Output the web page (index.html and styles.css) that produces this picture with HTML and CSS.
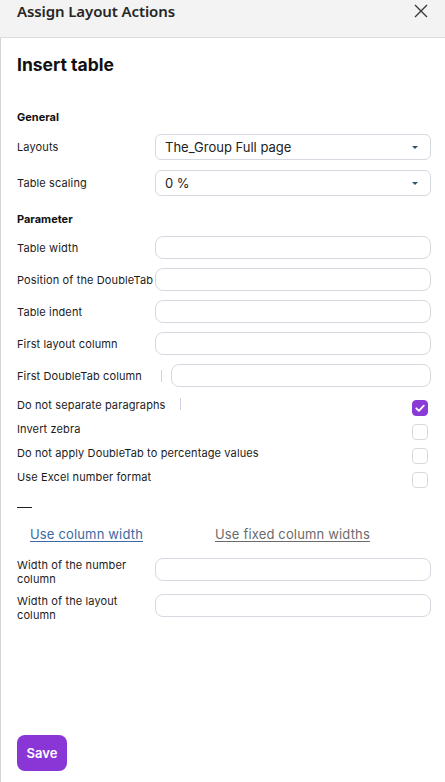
FILE: index.html
```html
<!DOCTYPE html>
<html>
<head>
<meta charset="utf-8">
<link rel="stylesheet" href="styles.css">
</head>
<body>
<div class="header">
  <div class="header-title">Assign Layout Actions</div>
  <button class="close" aria-label="Close">
    <svg width="16" height="16" viewBox="0 0 16 16"><path d="M2 2 L14 14 M14 2 L2 14" stroke="#3a3a3a" stroke-width="1.4" fill="none"/></svg>
  </button>
</div>
<div class="panel">
  <h1 class="title">Insert table</h1>

  <div class="section-title general">General</div>
  <div class="row row-select">
    <div class="label">Layouts</div>
    <div class="select"><span>The_Group Full page</span><span class="arrow"></span></div>
  </div>
  <div class="row row-select gap10">
    <div class="label">Table scaling</div>
    <div class="select"><span>0 %</span><span class="arrow"></span></div>
  </div>

  <div class="section-title param">Parameter</div>
  <div class="row row-input first">
    <div class="label">Table width</div>
    <div class="input"></div>
  </div>
  <div class="row row-input">
    <div class="label">Position of the DoubleTab</div>
    <div class="input"></div>
  </div>
  <div class="row row-input">
    <div class="label">Table indent</div>
    <div class="input"></div>
  </div>
  <div class="row row-input">
    <div class="label">First layout column</div>
    <div class="input"></div>
  </div>
  <div class="row row-input">
    <div class="label">First DoubleTab column</div>
    <div class="control-with-bar"><span class="bar"></span><div class="input"></div></div>
  </div>

  <div class="checks">
    <div class="check-row">
      <div class="check-label">Do not separate paragraphs<span class="bar bar-inline"></span></div>
      <span class="checkbox checked">
        <svg width="16" height="16" viewBox="0 0 16 16"><path d="M4.3 8.3 L6.9 10.8 L11.8 5.6" stroke="#fff" stroke-width="1.8" fill="none" stroke-linecap="round" stroke-linejoin="round"/></svg>
      </span>
    </div>
    <div class="check-row">
      <div class="check-label">Invert zebra</div>
      <span class="checkbox"></span>
    </div>
    <div class="check-row">
      <div class="check-label">Do not apply DoubleTab to percentage values</div>
      <span class="checkbox"></span>
    </div>
    <div class="check-row">
      <div class="check-label">Use Excel number format</div>
      <span class="checkbox"></span>
    </div>
  </div>

  <div class="dash"></div>

  <div class="links">
    <a class="link link-active" href="#">Use column width</a>
    <a class="link link-muted" href="#">Use fixed column widths</a>
  </div>

  <div class="row row-tall first-tall">
    <div class="label label-wrap">Width of the number column</div>
    <div class="input"></div>
  </div>
  <div class="row row-tall">
    <div class="label label-wrap">Width of the layout column</div>
    <div class="input"></div>
  </div>

  <div class="footer">
    <button class="save">Save</button>
  </div>
</div>
</body>
</html>
```

FILE: styles.css
```css
* { box-sizing: border-box; }
html, body {
  margin: 0;
  padding: 0;
  background: #fff;
}
body {
  width: 445px;
  height: 782px;
  overflow: hidden;
  font-family: Inter, "Noto Sans", sans-serif;
  color: #1c1c1c;
}
.header {
  height: 38px;
  background: #f3f3f3;
  border-bottom: 1px solid #dcdcdc;
  display: flex;
  align-items: flex-start;
  justify-content: space-between;
  padding: 0 17px;
}
.header-title {
  font-family: "Noto Sans", "Open Sans", sans-serif;
  font-weight: 600;
  font-size: 15px;
  line-height: 22px;
  color: #262626;
  letter-spacing: -0.1px;
}
.close {
  border: 0;
  background: transparent;
  padding: 0;
  margin: 3px -1px 0 0;
  width: 16px;
  height: 16px;
  display: flex;
}
.panel {
  border-left: 1px solid #d4d4d4;
  height: 744px;
  padding: 0 14px 0 16px;
  display: flex;
  flex-direction: column;
}
.title {
  margin: 15px 0 0 0;
  font-size: 17.5px;
  line-height: 24px;
  font-weight: 700;
  color: #111;
}
.section-title {
  font-size: 11px;
  line-height: 16px;
  font-weight: 700;
  color: #111;
}
.general { margin-top: 32px; }
.param { margin-top: 15px; }
.row {
  display: grid;
  grid-template-columns: 138px 1fr;
  align-items: center;
}
.label {
  font-size: 11px;
  line-height: 16px;
  letter-spacing: 0.12px;
  color: #1c1c1c;
  white-space: nowrap;
}
.row-select { margin-top: 9px; }
.row-select.gap10 { margin-top: 10px; }
.select {
  height: 26px;
  border: 1px solid #d6d9df;
  border-radius: 6px;
  display: flex;
  align-items: center;
  justify-content: space-between;
  padding: 0 12px 0 9px;
  font-size: 13px;
  color: #222;
}
.arrow {
  width: 0;
  height: 0;
  border-left: 3px solid transparent;
  border-right: 3px solid transparent;
  border-top: 3px solid #2d5766;
  margin-top: 1px;
}
.row-input { margin-top: 9px; }
.row-input.first { margin-top: 9px; }
.input {
  height: 23px;
  border: 1px solid #d6d9df;
  border-radius: 8px;
  background: #fff;
}
.control-with-bar {
  display: flex;
  align-items: center;
}
.control-with-bar .input { flex: 1; }
.bar {
  display: inline-block;
  width: 1px;
  height: 12px;
  background: #d6cfe6;
}
.control-with-bar .bar {
  margin: 0 9px 0 6px;
}
.bar-inline {
  margin-left: 14px;
  vertical-align: -1px;
}
.checks {
  margin-top: 10px;
  display: flex;
  flex-direction: column;
}
.check-row {
  height: 24px;
  display: flex;
  justify-content: space-between;
  align-items: flex-start;
}
.check-label {
  font-size: 11px;
  line-height: 16px;
  letter-spacing: 0.12px;
  color: #1c1c1c;
}
.checkbox {
  width: 16px;
  height: 16px;
  margin-top: 3px;
  margin-right: 3px;
  border: 1px solid #d6d9df;
  border-radius: 4px;
  display: flex;
}
.checkbox.checked {
  background: #8a3bd6;
  border-color: #8a3bd6;
}
.checkbox svg { margin: -1px; }
.dash {
  width: 15px;
  height: 1px;
  background: #222;
  margin-top: 14px;
}
.links {
  margin-top: 17px;
  display: flex;
  gap: 72px;
  padding-left: 13px;
  font-size: 13px;
  line-height: 18px;
  letter-spacing: 0.16px;
}
.link { text-decoration: underline; text-underline-offset: 2px; }
.link-active { color: #3c6aa6; }
.link-muted { color: #6b6b6b; }
.row-tall { align-items: start; margin-top: 8px; }
.row-tall.first-tall { margin-top: 15px; }
.label-wrap {
  white-space: normal;
  line-height: 14px;
  padding-right: 20px;
}
.footer {
  margin-top: auto;
  padding-bottom: 11px;
}
.save {
  width: 50px;
  height: 36px;
  border: 0;
  border-radius: 8px;
  background: #8a35d6;
  color: #fff;
  font-family: Inter, "Noto Sans", sans-serif;
  font-size: 13px;
  font-weight: 600;
  padding: 0;
}
```
